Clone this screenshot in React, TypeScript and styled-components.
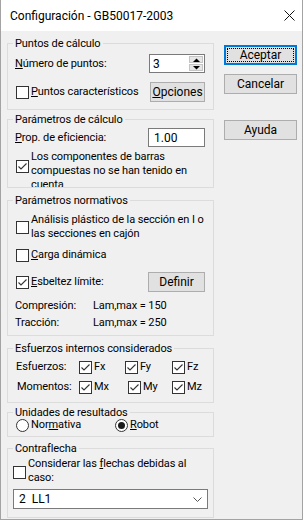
import React from "react";
import styled, { createGlobalStyle, css } from "styled-components";

const FONT = `"Segoe UI", Roboto, "Liberation Sans", Arial, sans-serif`;

const GlobalStyle = createGlobalStyle`
  html, body { margin: 0; padding: 0; background: #ffffff; }
  body { font-family: ${FONT}; font-size: 11px; letter-spacing: -0.1px; color: #000; }
  * { box-sizing: border-box; }
`;

const Window = styled.div`
  width: 303px;
  height: 520px;
  border: 1px solid #a3a3a3;
  border-top: none;
  background: #f0f0f0;
  display: flex;
  flex-direction: column;
`;

const TitleBar = styled.div`
  height: 31px;
  flex: none;
  background: #ffffff;
  display: flex;
  align-items: center;
  justify-content: space-between;
  padding: 0 7px 0 9px;
`;

const Title = styled.span`
  font-size: 12px;
  letter-spacing: 0;
  line-height: 16px;
  white-space: nowrap;
`;

const Body = styled.div`
  flex: 1;
  display: flex;
  padding: 0 5px 0 6px;
`;

const LeftCol = styled.div`
  width: 207px;
  display: flex;
  flex-direction: column;
`;

const RightCol = styled.div`
  width: 73px;
  margin-left: 10px;
  display: flex;
  flex-direction: column;
  padding-top: 14px;
`;

const Group = styled.div<{ $mt: number; $h: number }>`
  margin-top: ${(p) => p.$mt}px;
  height: ${(p) => p.$h}px;
  border: 1px solid #dcdcdc;
  display: flex;
  flex-direction: column;
  flex: none;
`;

const Legend = styled.div`
  align-self: flex-start;
  margin: -8px 0 0 5px;
  padding: 0 2px;
  height: 15px;
  line-height: 15px;
  background: #f0f0f0;
  white-space: nowrap;
  flex: none;
`;

const GroupContent = styled.div<{ $pt: number; $pl?: number; $pr?: number; $clip?: boolean }>`
  flex: 1;
  min-height: 0;
  overflow: ${(p) => (p.$clip ? "hidden" : "visible")};
  display: flex;
  flex-direction: column;
  padding: ${(p) => p.$pt}px ${(p) => p.$pr ?? 8}px 0 ${(p) => p.$pl ?? 7}px;
`;

const Row = styled.div<{ $h: number; $mt?: number; $start?: boolean }>`
  height: ${(p) => p.$h}px;
  margin-top: ${(p) => p.$mt ?? 0}px;
  display: flex;
  align-items: center;
  justify-content: ${(p) => (p.$start ? "flex-start" : "space-between")};
  flex: none;
`;

const Label = styled.span<{ $ml?: number; $w?: number }>`
  line-height: 14px;
  white-space: nowrap;
  margin-left: ${(p) => p.$ml ?? 0}px;
  ${(p) =>
    p.$w
      ? css`
          width: ${p.$w}px;
          flex: none;
        `
      : ""}
`;

const U = styled.span`
  text-decoration: underline;
  text-underline-offset: 1px;
`;

const CheckRow = styled.label<{ $ml?: number; $w?: number; $top?: boolean }>`
  display: flex;
  align-items: ${(p) => (p.$top ? "flex-start" : "center")};
  margin-left: ${(p) => p.$ml ?? 0}px;
  flex: none;
  ${(p) =>
    p.$w
      ? css`
          width: ${p.$w}px;
        `
      : ""}
`;

const BoxFrame = styled.span<{ $mt?: number }>`
  width: 13px;
  height: 13px;
  flex: none;
  border: 1px solid #333333;
  background: #ffffff;
  margin-right: 2px;
  margin-top: ${(p) => p.$mt ?? 0}px;
  display: flex;
`;

const TextBlock = styled.span`
  line-height: 14px;
  white-space: nowrap;
  display: flex;
  flex-direction: column;
`;

const CheckBox = ({ checked, mt }: { checked?: boolean; mt?: number }) => (
  <BoxFrame $mt={mt}>
    {checked && (
      <svg width="11" height="11" viewBox="0 0 11 11">
        <path d="M1.5 5.5 L4 8 L9.5 2.5" fill="none" stroke="#333" strokeWidth="1.1" />
      </svg>
    )}
  </BoxFrame>
);

const RadioFrame = styled.span`
  width: 13px;
  height: 13px;
  flex: none;
  border: 1px solid #333333;
  border-radius: 50%;
  background: #ffffff;
  margin-right: 2px;
  display: flex;
  align-items: center;
  justify-content: center;
`;

const RadioDot = styled.span`
  width: 7px;
  height: 7px;
  border-radius: 50%;
  background: #1a1a1a;
`;

const Radio = ({ checked }: { checked?: boolean }) => (
  <RadioFrame>{checked && <RadioDot />}</RadioFrame>
);

const Field = styled.div<{ $w: number; $h: number }>`
  width: ${(p) => p.$w}px;
  height: ${(p) => p.$h}px;
  border: 1px solid #7a7a7a;
  background: #ffffff;
  display: flex;
  align-items: center;
  flex: none;
`;

const FieldText = styled.span<{ $pl: number }>`
  flex: 1;
  padding-left: ${(p) => p.$pl}px;
  line-height: 14px;
  white-space: nowrap;
  font-size: 12px;
  letter-spacing: 0;
`;

const SpinCol = styled.div`
  width: 14px;
  align-self: stretch;
  margin: 1px 1px 1px 0;
  display: flex;
  flex-direction: column;
  gap: 1px;
`;

const SpinBtn = styled.div`
  flex: 1;
  background: #e6e6e6;
  border: 1px solid #c4c4c4;
  display: flex;
  align-items: center;
  justify-content: center;
`;

const Arrow = ({ up }: { up?: boolean }) => (
  <svg width="7" height="4" viewBox="0 0 7 4">
    <path d={up ? "M0 4 L3.5 0.5 L7 4 Z" : "M0 0 L3.5 3.5 L7 0 Z"} fill="#000" />
  </svg>
);

const Button = styled.button<{ $w?: number; $mt?: number; $default?: boolean }>`
  width: ${(p) => p.$w ?? 73}px;
  height: 20px;
  margin-top: ${(p) => p.$mt ?? 0}px;
  padding: 0;
  font: inherit;
  font-size: 12px;
  letter-spacing: 0;
  color: #000;
  background: #e1e1e1;
  border: 1px solid #adadad;
  display: flex;
  align-items: center;
  justify-content: center;
  flex: none;
  ${(p) =>
    p.$default &&
    css`
      border: 2px solid #0078d7;
      position: relative;
    `}
`;

const FocusRect = styled.span`
  position: absolute;
  inset: 1px;
  border: 1px dotted #000;
`;

const Chevron = styled.svg`
  margin-right: 5px;
  flex: none;
`;

const CloseIcon = () => (
  <svg width="11" height="11" viewBox="0 0 11 11">
    <path d="M0.5 0.5 L10.5 10.5 M10.5 0.5 L0.5 10.5" stroke="#111" strokeWidth="1" />
  </svg>
);

export default function App() {
  return (
    <>
      <GlobalStyle />
      <Window>
        <TitleBar>
          <Title>Configuración - GB50017-2003</Title>
          <CloseIcon />
        </TitleBar>
        <Body>
          <LeftCol>
            <Group $mt={12} $h={67}>
              <Legend>Puntos de cálculo</Legend>
              <GroupContent $pt={3}>
                <Row $h={19}>
                  <Label>
                    <U>N</U>úmero de puntos:
                  </Label>
                  <Field $w={56} $h={19}>
                    <FieldText $pl={3}>3</FieldText>
                    <SpinCol>
                      <SpinBtn>
                        <Arrow up />
                      </SpinBtn>
                      <SpinBtn>
                        <Arrow />
                      </SpinBtn>
                    </SpinCol>
                  </Field>
                </Row>
                <Row $h={20} $mt={9}>
                  <CheckRow $ml={1}>
                    <CheckBox />
                    <Label>
                      <U>P</U>untos característicos
                    </Label>
                  </CheckRow>
                  <Button $w={55}>
                    <U>O</U>pciones
                  </Button>
                </Row>
              </GroupContent>
            </Group>

            <Group $mt={9} $h={69}>
              <Legend>Parámetros de cálculo</Legend>
              <GroupContent $pt={1} $clip>
                <Row $h={19}>
                  <Label>
                    <U>P</U>rop. de eficiencia:
                  </Label>
                  <Field $w={57} $h={19}>
                    <FieldText $pl={5}>1.00</FieldText>
                  </Field>
                </Row>
                <Row $h={42} $mt={3}>
                  <CheckRow $ml={1} $top>
                    <CheckBox checked mt={10} />
                    <TextBlock>
                      <span>Los componentes de barras</span>
                      <span>compuestas no se han tenido en</span>
                      <span>cuenta</span>
                    </TextBlock>
                  </CheckRow>
                </Row>
              </GroupContent>
            </Group>

            <Group $mt={12} $h={136}>
              <Legend>Parámetros normativos</Legend>
              <GroupContent $pt={5}>
                <Row $h={28}>
                  <CheckRow $ml={1} $top>
                    <CheckBox mt={8} />
                    <TextBlock>
                      <span>Análisis plástico de la sección en I o</span>
                      <span>las secciones en cajón</span>
                    </TextBlock>
                  </CheckRow>
                </Row>
                <Row $h={14} $mt={7}>
                  <CheckRow $ml={1}>
                    <CheckBox />
                    <Label>
                      <U>C</U>arga dinámica
                    </Label>
                  </CheckRow>
                </Row>
                <Row $h={20} $mt={10}>
                  <CheckRow $ml={1}>
                    <CheckBox checked />
                    <Label>
                      <U>E</U>sbeltez límite:
                    </Label>
                  </CheckRow>
                  <Button $w={57}>Definir</Button>
                </Row>
                <Row $h={14} $mt={7} $start>
                  <Label $w={78}>Compresión:</Label>
                  <Label>Lam,max = 150</Label>
                </Row>
                <Row $h={14} $mt={3} $start>
                  <Label $w={78}>Tracción:</Label>
                  <Label>Lam,max = 250</Label>
                </Row>
              </GroupContent>
            </Group>

            <Group $mt={12} $h={55}>
              <Legend>Esfuerzos internos considerados</Legend>
              <GroupContent $pt={4}>
                <Row $h={14} $start>
                  <Label $w={63} $ml={1}>Esfuerzos:</Label>
                  <CheckRow $w={46}>
                    <CheckBox checked />
                    <Label>Fx</Label>
                  </CheckRow>
                  <CheckRow $w={47}>
                    <CheckBox checked />
                    <Label>Fy</Label>
                  </CheckRow>
                  <CheckRow>
                    <CheckBox checked />
                    <Label>Fz</Label>
                  </CheckRow>
                </Row>
                <Row $h={14} $mt={6} $start>
                  <Label $w={62} $ml={2}>Momentos:</Label>
                  <CheckRow $w={49}>
                    <CheckBox checked />
                    <Label>Mx</Label>
                  </CheckRow>
                  <CheckRow $w={44}>
                    <CheckBox checked />
                    <Label>My</Label>
                  </CheckRow>
                  <CheckRow>
                    <CheckBox checked />
                    <Label>Mz</Label>
                  </CheckRow>
                </Row>
              </GroupContent>
            </Group>

            <Group $mt={9} $h={25}>
              <Legend>Unidades de resultados</Legend>
              <GroupContent $pt={0}>
                <Row $h={14} $mt={-2} $start>
                  <CheckRow $ml={1} $w={99}>
                    <Radio />
                    <Label>
                      Nor<U>m</U>ativa
                    </Label>
                  </CheckRow>
                  <CheckRow>
                    <Radio checked />
                    <Label>
                      <U>R</U>obot
                    </Label>
                  </CheckRow>
                </Row>
              </GroupContent>
            </Group>

            <Group $mt={11} $h={70}>
              <Legend>Contraflecha</Legend>
              <GroupContent $pt={1} $pl={5} $pr={5}>
                <Row $h={28}>
                  <CheckRow $top>
                    <CheckBox mt={9} />
                    <TextBlock>
                      <span>
                        Considerar las <U>f</U>lechas debidas al
                      </span>
                      <span>caso:</span>
                    </TextBlock>
                  </CheckRow>
                </Row>
                <Row $h={20} $mt={4}>
                  <Field $w={195} $h={20}>
                    <FieldText $pl={5}>2&nbsp;&nbsp;LL1</FieldText>
                    <Chevron width="9" height="5" viewBox="0 0 9 5">
                      <path d="M0.5 0.5 L4.5 4.5 L8.5 0.5" fill="none" stroke="#555" strokeWidth="1" />
                    </Chevron>
                  </Field>
                </Row>
              </GroupContent>
            </Group>
          </LeftCol>

          <RightCol>
            <Button $default>
              <FocusRect />
              Aceptar
            </Button>
            <Button $mt={9}>Cancelar</Button>
            <Button $mt={26}>Ayuda</Button>
          </RightCol>
        </Body>
      </Window>
    </>
  );
}
